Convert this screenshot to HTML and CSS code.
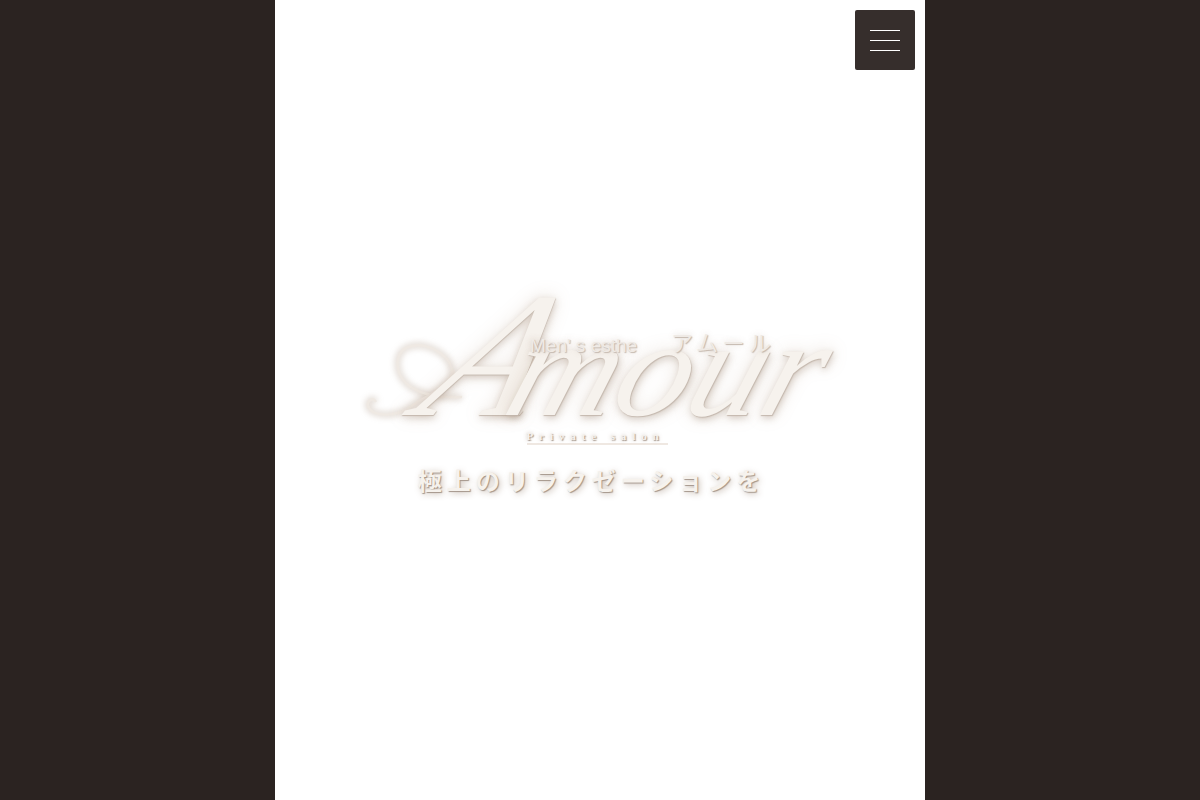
FILE: index.html
```html
<!DOCTYPE html>
<html lang="ja">
<head>
<meta charset="utf-8">
<title>Amour</title>
<link rel="stylesheet" href="styles.css">
</head>
<body>
<main class="page">
  <button class="menu" type="button" aria-label="menu">
    <span class="menu-line"></span>
    <span class="menu-line"></span>
    <span class="menu-line"></span>
  </button>
  <div class="hero">
    <div class="logo">
      <svg class="swash" viewBox="360 330 110 95" aria-hidden="true">
        <path class="swash-glow" d="M376 401C373 396 367 399 368 405C371 416 396 417 412 405C428 394 456 382 452 368C448 352 425 340 408 346C394 352 394 372 408 384C420 394 442 397 462 396"/>
        <path class="swash-line" d="M376 401C373 396 367 399 368 405C371 416 396 417 412 405C428 394 456 382 452 368C448 352 425 340 408 346C394 352 394 372 408 384C420 394 442 397 462 396"/>
      </svg>
      <div class="amour"><span class="amour-a">A</span><span class="amour-rest">mour</span></div>
      <span class="mens">Men' s esthe</span>
      <span class="kana">アムール</span>
    </div>
    <p class="private">Private salon</p>
    <p class="tagline">極上のリラクゼーションを</p>
  </div>
</main>
</body>
</html>
```
FILE: styles.css
```css
* { box-sizing: border-box; }
html, body { height: 100%; }
body {
  margin: 0;
  background: #2b2321;
  overflow: hidden;
  font-family: "Liberation Serif", "Noto Sans CJK JP", serif;
}
.page {
  position: relative;
  width: 650px;
  height: 800px;
  margin: 0 auto;
  background: #fff;
  display: flex;
  align-items: center;
  justify-content: center;
}
.menu {
  position: absolute;
  top: 10px;
  right: 10px;
  width: 60px;
  height: 60px;
  padding: 0;
  border: 0;
  border-radius: 2px;
  background: #362e2c;
  display: flex;
  flex-direction: column;
  align-items: center;
  justify-content: center;
  gap: 9px;
}
.menu-line {
  display: block;
  width: 30px;
  height: 1px;
  background: #fff;
}
.hero {
  display: flex;
  flex-direction: column;
  align-items: center;
  width: 480px;
  margin: -10px 0 0 -10px;
}
.logo {
  position: relative;
  width: 480px;
  height: 137px;
}
.amour {
  display: flex;
  align-items: baseline;
  height: 127px;
  padding: 0 0 0 55px;
  font-style: italic;
  line-height: 124px;
  white-space: nowrap;
  color: #f6f2ed;
  text-shadow: 1px 1px 1px #c4b8ae, 2px 3px 7px rgba(120, 90, 65, .28), 0 0 16px rgba(170, 135, 105, .25);
}
.amour-a {
  display: inline-block;
  font-size: 178px;
  transform: skewX(-30deg);
  transform-origin: 0 100%;
}
.amour-rest {
  display: inline-block;
  margin-left: -24px;
  font-size: 138px;
  letter-spacing: -1px;
  transform: skewX(-18deg) scaleX(1.08);
  transform-origin: 0 100%;
}
.swash {
  position: absolute;
  left: 5px;
  top: 38px;
  width: 110px;
  height: 95px;
  fill: none;
}
.swash-glow { stroke: rgba(150, 120, 95, .32); stroke-width: 5; filter: blur(3px); }
.swash-line { stroke: #efe9e3; stroke-width: 2.5; }
.mens, .kana {
  position: absolute;
  color: #efeae5;
  white-space: nowrap;
  text-shadow: 1px 1px 1px #c4b8ae, 0 0 6px rgba(150, 120, 95, .3);
}
.mens {
  left: 175px;
  top: 42px;
  font-family: "Liberation Sans", sans-serif;
  font-size: 19px;
  line-height: 22px;
}
.kana {
  left: 316px;
  top: 35px;
  font-family: "Noto Sans CJK JP", sans-serif;
  font-size: 22px;
  line-height: 26px;
  letter-spacing: 4.5px;
}
.private {
  margin: 0 0 0 4px;
  padding-bottom: 0;
  width: 141px;
  font-size: 11px;
  line-height: 13px;
  font-weight: 700;
  letter-spacing: 5.9px;
  white-space: nowrap;
  color: #f5f1ec;
  border-bottom: 2px solid #efe8e2;
  text-shadow: 1px 1px 1px #a89a8f, 0 0 4px rgba(130, 100, 80, .4);
}
.tagline {
  margin: 18px 0 0 -7px;
  font-family: "Noto Sans CJK JP", sans-serif;
  font-size: 24px;
  line-height: 34px;
  font-weight: 700;
  letter-spacing: 5px;
  white-space: nowrap;
  color: #f6f2ed;
  text-shadow: 1px 1px 1px #a3958a, 2px 2px 6px rgba(120, 90, 65, .4);
}
```
